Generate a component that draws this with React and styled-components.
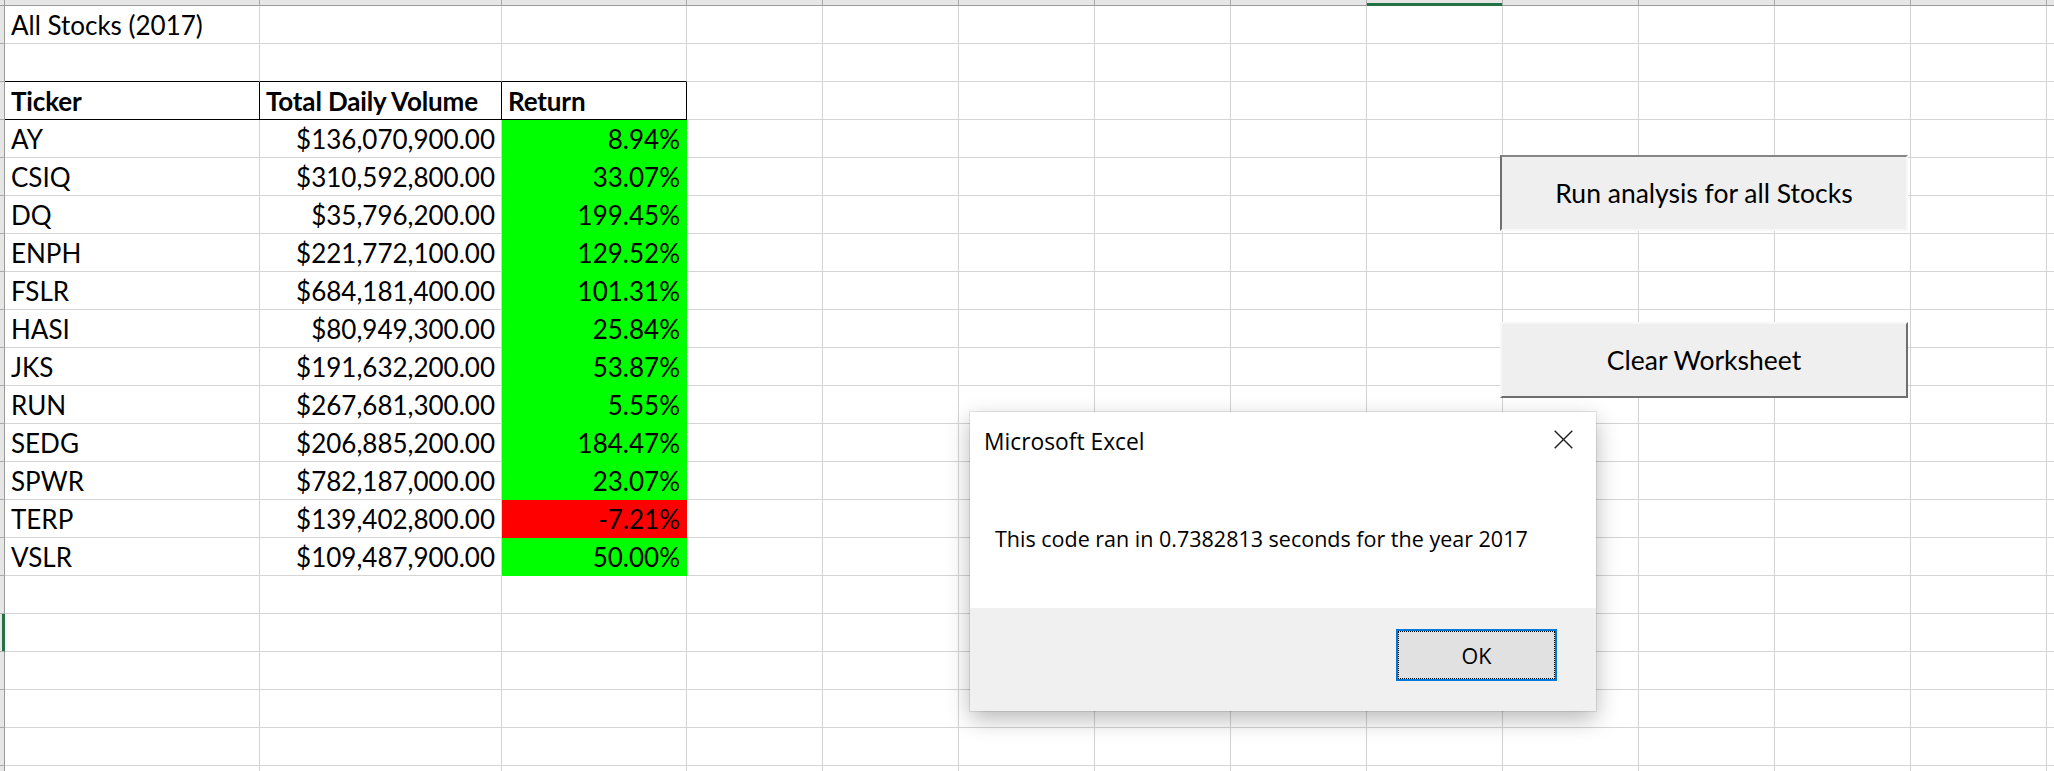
import React from "react";
import styled, { createGlobalStyle } from "styled-components";

const GlobalStyle = createGlobalStyle`
  html, body { margin: 0; padding: 0; background: #ffffff; overflow: hidden; }
  #root { width: 2054px; height: 771px; }
`;

const GRID = "#d4d4d4";
const CELL_FONT = "Lato, 'Liberation Sans', sans-serif";
const UI_FONT = "'Segoe UI', 'Open Sans', 'Noto Sans', sans-serif";

const Sheet = styled.div`
  position: relative;
  width: 2054px;
  height: 771px;
  overflow: hidden;
  display: grid;
  grid-template-columns: 5px 255px 242px 185px repeat(11, 136px);
  grid-template-rows: 6px repeat(21, 38px);
  background: #ffffff;
`;

const Corner = styled.div`
  box-sizing: border-box;
  background: #e6e6e6;
  border-right: 1px solid #9b9b9b;
  border-bottom: 1px solid #9b9b9b;
`;

const ColHead = styled.div`
  box-sizing: border-box;
  background: #e6e6e6;
  border-right: 1px solid #ababab;
  border-bottom: 1px solid ${(p) => (p.$active ? "#217346" : "#9b9b9b")};
  box-shadow: ${(p) => (p.$active ? "inset 0 -2px 0 #217346" : "none")};
`;

const RowHead = styled.div`
  box-sizing: border-box;
  background: #e6e6e6;
  border-right: 1px solid ${(p) => (p.$active ? "#217346" : "#9b9b9b")};
  border-bottom: 1px solid #ababab;
  box-shadow: ${(p) => (p.$active ? "inset -2px 0 0 #217346" : "none")};
`;

const Cell = styled.div`
  box-sizing: border-box;
  min-width: 0;
  display: flex;
  align-items: flex-end;
  justify-content: ${(p) => (p.$align === "right" ? "flex-end" : "flex-start")};
  padding: 0 6px 5px 6px;
  background: ${(p) => p.$fill || "#ffffff"};
  border-right: 1px solid ${(p) => p.$edgeRight || p.$fill || GRID};
  border-bottom: 1px solid ${(p) => p.$edgeBottom || p.$fill || GRID};
  font-family: ${CELL_FONT};
  font-size: 26px;
  line-height: 26px;
  font-weight: ${(p) => (p.$bold ? 700 : 400)};
  letter-spacing: ${(p) => (p.$bold ? "-0.15px" : "0")};
  color: #000000;
  white-space: nowrap;
`;

const SheetButton = styled.div`
  position: absolute;
  left: ${(p) => p.$left}px;
  top: ${(p) => p.$top}px;
  width: 408px;
  height: 76px;
  box-sizing: border-box;
  display: flex;
  align-items: center;
  justify-content: center;
  background: #efefef;
  border-style: solid;
  border-width: 2px;
  border-color: ${(p) =>
    p.$pressed
      ? "#858585 #f7f7f7 #f7f7f7 #6f6f6f"
      : "#f7f7f7 #6f6f6f #6f6f6f #f7f7f7"};
  font-family: ${CELL_FONT};
  font-size: 26.5px;
  line-height: 26px;
  color: #000000;
  white-space: nowrap;
`;

const Dialog = styled.div`
  position: absolute;
  left: 970px;
  top: 412px;
  width: 626px;
  height: 299px;
  display: flex;
  flex-direction: column;
  background: #ffffff;
  box-shadow: 0 0 0 1px rgba(0, 0, 0, 0.09), 0 8px 22px rgba(0, 0, 0, 0.28);
  font-family: ${UI_FONT};
  color: #000000;
`;

const DialogBody = styled.div`
  flex: 1;
  display: flex;
  flex-direction: column;
`;

const DialogHeader = styled.div`
  display: flex;
  justify-content: space-between;
  align-items: flex-start;
  padding: 15px 23px 0 14px;
`;

const DialogTitle = styled.div`
  font-size: 22.8px;
  line-height: 29px;
`;

const CloseIcon = styled.svg`
  margin-top: 3px;
  width: 19px;
  height: 19px;
`;

const DialogMessage = styled.div`
  margin-top: 68px;
  padding-left: 25px;
  font-size: 21.5px;
  line-height: 29px;
  white-space: nowrap;
`;

const DialogFooter = styled.div`
  height: 103px;
  box-sizing: border-box;
  background: #f0f0f0;
  display: flex;
  justify-content: flex-end;
  align-items: flex-start;
  padding: 21px 39px 0 0;
`;

const OkButton = styled.div`
  width: 161px;
  height: 52px;
  box-sizing: border-box;
  border: 2px solid #0078d7;
  background: #e1e1e1;
  outline: 1px dotted #000000;
  outline-offset: -3px;
  display: flex;
  align-items: center;
  justify-content: center;
  font-size: 21.5px;
  line-height: 29px;
`;

const stocks = [
  ["AY", "$136,070,900.00", "8.94%"],
  ["CSIQ", "$310,592,800.00", "33.07%"],
  ["DQ", "$35,796,200.00", "199.45%"],
  ["ENPH", "$221,772,100.00", "129.52%"],
  ["FSLR", "$684,181,400.00", "101.31%"],
  ["HASI", "$80,949,300.00", "25.84%"],
  ["JKS", "$191,632,200.00", "53.87%"],
  ["RUN", "$267,681,300.00", "5.55%"],
  ["SEDG", "$206,885,200.00", "184.47%"],
  ["SPWR", "$782,187,000.00", "23.07%"],
  ["TERP", "$139,402,800.00", "-7.21%"],
  ["VSLR", "$109,487,900.00", "50.00%"],
];

const COL_COUNT = 14;
const ROW_COUNT = 21;
const ACTIVE_COL = 8;
const ACTIVE_ROW = 16;
const HEADERS = ["Ticker", "Total Daily Volume", "Return"];

function cellProps(r, c) {
  if (r === 0 && c === 0) return { children: "All Stocks (2017)" };
  if (r === 1 && c < 3) return { $edgeBottom: "#000000" };
  if (r === 2 && c < 3)
    return {
      children: HEADERS[c],
      $bold: true,
      $edgeBottom: "#000000",
      $edgeRight: "#000000",
    };
  const d = r - 3;
  if (d >= 0 && d < stocks.length && c < 3) {
    const row = stocks[d];
    if (c === 0) return { children: row[0] };
    if (c === 1) return { children: row[1], $align: "right" };
    const negative = row[2].startsWith("-");
    return {
      children: row[2],
      $align: "right",
      $fill: negative ? "#ff0000" : "#00ff00",
    };
  }
  return {};
}

export default function App() {
  const items = [<Corner key="corner" />];
  for (let c = 0; c < COL_COUNT; c++) {
    items.push(<ColHead key={`h${c}`} $active={c === ACTIVE_COL} />);
  }
  for (let r = 0; r < ROW_COUNT; r++) {
    items.push(<RowHead key={`r${r}`} $active={r === ACTIVE_ROW} />);
    for (let c = 0; c < COL_COUNT; c++) {
      items.push(<Cell key={`c${r}-${c}`} {...cellProps(r, c)} />);
    }
  }

  return (
    <>
      <GlobalStyle />
      <Sheet>
        {items}
        <SheetButton $left={1500} $top={155} $pressed>
          Run analysis for all Stocks
        </SheetButton>
        <SheetButton $left={1500} $top={322}>
          Clear Worksheet
        </SheetButton>
        <Dialog>
          <DialogBody>
            <DialogHeader>
              <DialogTitle>Microsoft Excel</DialogTitle>
              <CloseIcon viewBox="0 0 19 19">
                <path
                  d="M0.7 0.7 L18.3 18.3 M18.3 0.7 L0.7 18.3"
                  stroke="#1f1f1f"
                  strokeWidth="1.4"
                  fill="none"
                />
              </CloseIcon>
            </DialogHeader>
            <DialogMessage>
              This code ran in 0.7382813 seconds for the year 2017
            </DialogMessage>
          </DialogBody>
          <DialogFooter>
            <OkButton>OK</OkButton>
          </DialogFooter>
        </Dialog>
      </Sheet>
    </>
  );
}
